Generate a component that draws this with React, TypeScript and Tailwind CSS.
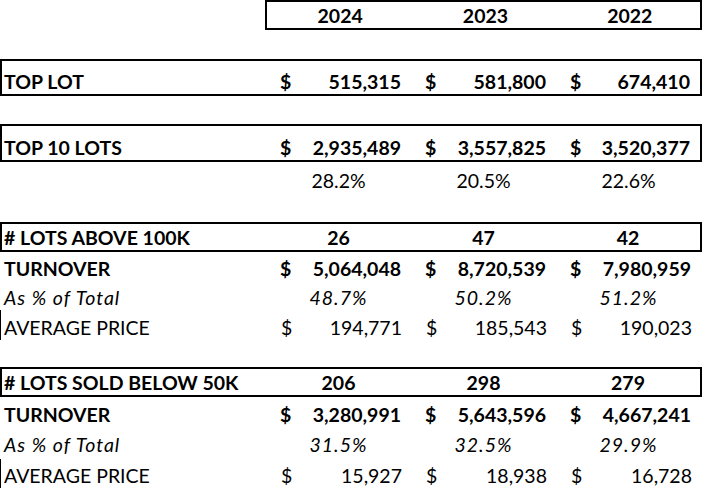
import React from "react";

const COLS = "grid grid-cols-[266px_145px_145px_145px]";
const BCOLS = "grid grid-cols-[264px_145px_145px_144px]";

function Money({ v }: { v: string }) {
  return (
    <div className="flex justify-between pl-[14px] pr-[10px]">
      <span>$</span>
      <span>{v}</span>
    </div>
  );
}

function Cell({ children, className = "" }: { children?: React.ReactNode; className?: string }) {
  return <div className={`flex flex-col justify-end pb-[3px] ${className}`}>{children}</div>;
}

function BoxRow({ label, cells, h }: { label: string; cells: React.ReactNode[]; h: string }) {
  return (
    <div className={`border-2 border-black w-[702px] ${h} ${BCOLS} font-bold`}>
      <Cell className="pl-[2px]">{label}</Cell>
      {cells.map((c, i) => (
        <Cell key={i}>{c}</Cell>
      ))}
    </div>
  );
}

function Row({
  label,
  cells,
  h,
  cls = "",
  line = false,
}: {
  label: string;
  cells: React.ReactNode[];
  h: string;
  cls?: string;
  line?: boolean;
}) {
  return (
    <div className={`${COLS} ${h} ${cls} ${line ? "border-l border-black" : ""}`}>
      <Cell className={line ? "pl-[3px]" : "pl-[4px]"}>{label}</Cell>
      {cells.map((c, i) => (
        <Cell key={i}>{c}</Cell>
      ))}
    </div>
  );
}

const C = ({ t }: { t: string }) => <div className="text-center">{t}</div>;

export default function App() {
  return (
    <div className="w-[703px] h-[488px] bg-white text-black font-[Lato,sans-serif] text-[19.5px] leading-none overflow-hidden">
      {/* header */}
      <div className="ml-[265px] w-[437px] h-[30px] border-2 border-black grid grid-cols-3 font-bold">
        <Cell className="text-center pl-[2px]">2024</Cell>
        <Cell className="text-center pl-[4px]">2023</Cell>
        <Cell className="text-center pl-[4px]">2022</Cell>
      </div>
      <div className="h-[29px]" />
      <BoxRow
        label="TOP LOT"
        h="h-[37px]"
        cells={[<Money v="515,315" />, <Money v="581,800" />, <Money v="674,410" />]}
      />
      <div className="h-[28px]" />
      <BoxRow
        label="TOP 10 LOTS"
        h="h-[38px]"
        cells={[<Money v="2,935,489" />, <Money v="3,557,825" />, <Money v="3,520,377" />]}
      />
      <Row label="" h="h-[31px]" cells={[<C t="28.2%" />, <C t="20.5%" />, <C t="22.6%" />]} />
      <div className="h-[29px]" />
      <BoxRow label="# LOTS ABOVE 100K" h="h-[30px]" cells={[<C t="26" />, <C t="47" />, <C t="42" />]} />
      <Row
        label="TURNOVER"
        h="h-[29px]"
        cls="font-bold"
        cells={[<Money v="5,064,048" />, <Money v="8,720,539" />, <Money v="7,980,959" />]}
      />
      <Row
        label="As % of Total"
        h="h-[29px]"
        cls="italic tracking-[1px]"
        cells={[<C t="48.7%" />, <C t="50.2%" />, <C t="51.2%" />]}
      />
      <Row
        label="AVERAGE PRICE"
        h="h-[30px]"
        line
        cells={[<Money v="194,771" />, <Money v="185,543" />, <Money v="190,023" />]}
      />
      <div className="h-[27px]" />
      <BoxRow
        label="# LOTS SOLD BELOW 50K"
        h="h-[30px]"
        cells={[<C t="206" />, <C t="298" />, <C t="279" />]}
      />
      <Row
        label="TURNOVER"
        h="h-[30px]"
        cls="font-bold"
        cells={[<Money v="3,280,991" />, <Money v="5,643,596" />, <Money v="4,667,241" />]}
      />
      <Row
        label="As % of Total"
        h="h-[30px]"
        cls="italic tracking-[1px]"
        cells={[<C t="31.5%" />, <C t="32.5%" />, <C t="29.9%" />]}
      />
      <div className="h-[2px]" />
      <Row
        label="AVERAGE PRICE"
        h="h-[29px]"
        line
        cells={[<Money v="15,927" />, <Money v="18,938" />, <Money v="16,728" />]}
      />
    </div>
  );
}
